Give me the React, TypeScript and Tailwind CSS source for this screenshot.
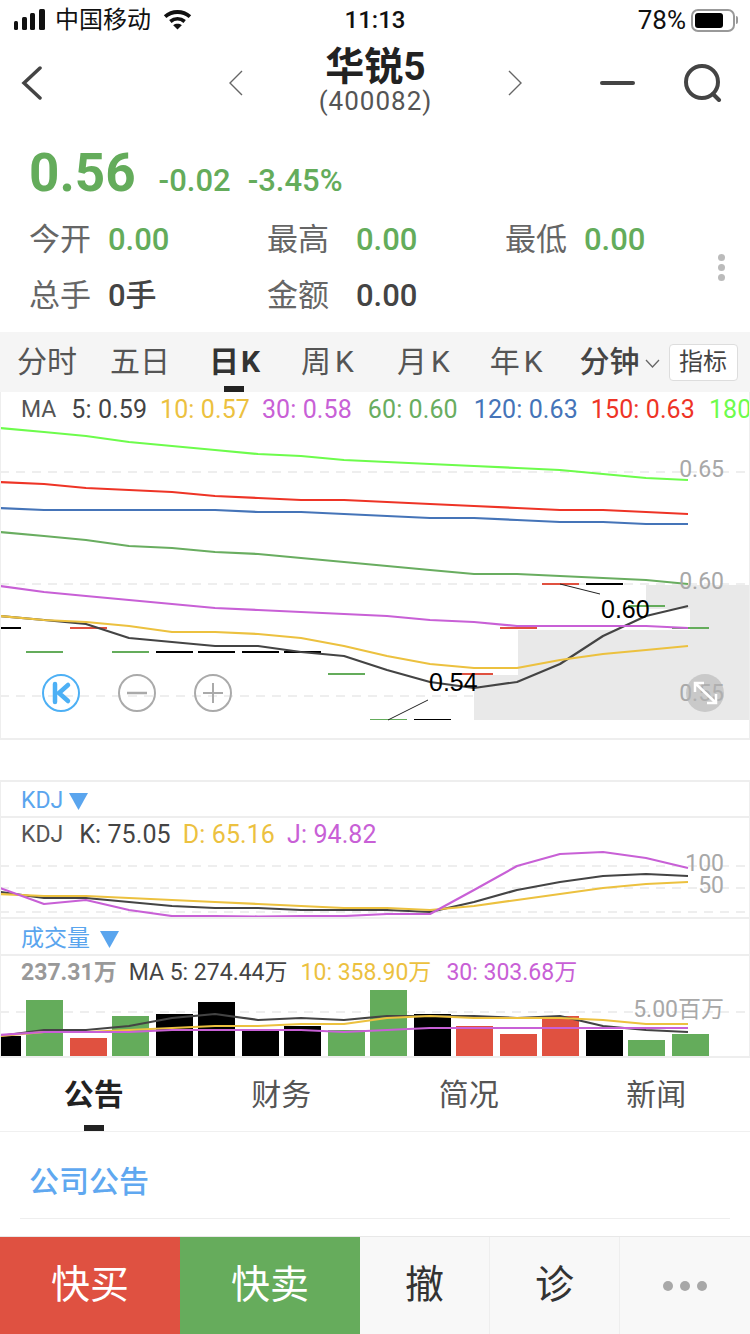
import React from 'react';

const xs = [0, 44, 86, 129, 172, 215, 258, 301, 344, 387, 430, 474, 517, 560, 603, 646, 688];

const RED = '#e05140';
const GREEN = '#64ac5b';
const YELLOW = '#ecc13f';
const PURPLE = '#c860d6';
const DARK = '#444444';

const maLines = [
  { color: '#6dfc4c', ys: [428, 432, 436, 442, 446, 450, 454, 456, 460, 462, 464, 466, 468, 470, 474, 478, 480] },
  { color: '#ee3426', ys: [482, 484, 488, 490, 492, 496, 498, 500, 500, 502, 504, 506, 508, 510, 510, 512, 514] },
  { color: '#4574b8', ys: [508, 510, 510, 510, 510, 510, 512, 512, 514, 516, 518, 518, 520, 522, 522, 524, 524] },
  { color: '#69ad60', ys: [532, 536, 540, 546, 548, 552, 554, 558, 562, 566, 570, 574, 574, 576, 578, 580, 584] },
  { color: DARK, ys: [616, 620, 624, 638, 642, 646, 646, 652, 656, 670, 682, 688, 682, 664, 636, 616, 606] },
  { color: YELLOW, ys: [616, 620, 622, 626, 632, 632, 634, 638, 646, 656, 664, 668, 668, 660, 654, 650, 646] },
  { color: PURPLE, ys: [586, 592, 596, 600, 604, 608, 610, 612, 614, 616, 620, 622, 626, 626, 626, 626, 628] },
];

// flat candles, open == close
const candles = [
  { x: 0, w: 21, y: 628, c: '#000' },
  { x: 26, w: 37, y: 652, c: GREEN },
  { x: 70, w: 37, y: 628, c: RED },
  { x: 112, w: 37, y: 652, c: GREEN },
  { x: 156, w: 37, y: 652, c: '#000' },
  { x: 198, w: 37, y: 652, c: '#000' },
  { x: 242, w: 37, y: 652, c: '#000' },
  { x: 284, w: 37, y: 652, c: '#000' },
  { x: 328, w: 37, y: 674, c: GREEN },
  { x: 370, w: 37, y: 719.5, c: GREEN, thin: true },
  { x: 414, w: 37, y: 719.5, c: '#000', thin: true },
  { x: 456, w: 37, y: 674, c: RED },
  { x: 500, w: 37, y: 628, c: RED },
  { x: 542, w: 37, y: 584, c: RED },
  { x: 586, w: 37, y: 584, c: '#000' },
  { x: 628, w: 37, y: 606, c: GREEN },
  { x: 672, w: 37, y: 628, c: GREEN },
];

const volumes = [
  { x: 0, w: 21, top: 1036, c: '#000' },
  { x: 26, w: 37, top: 1000, c: GREEN },
  { x: 70, w: 37, top: 1038, c: RED },
  { x: 112, w: 37, top: 1016, c: GREEN },
  { x: 156, w: 37, top: 1014, c: '#000' },
  { x: 198, w: 37, top: 1002, c: '#000' },
  { x: 242, w: 37, top: 1030, c: '#000' },
  { x: 284, w: 37, top: 1026, c: '#000' },
  { x: 328, w: 37, top: 1030, c: GREEN },
  { x: 370, w: 37, top: 990, c: GREEN },
  { x: 414, w: 37, top: 1014, c: '#000' },
  { x: 456, w: 37, top: 1026, c: RED },
  { x: 500, w: 37, top: 1034, c: RED },
  { x: 542, w: 37, top: 1016, c: RED },
  { x: 586, w: 37, top: 1030, c: '#000' },
  { x: 628, w: 37, top: 1040, c: GREEN },
  { x: 672, w: 37, top: 1034, c: GREEN },
];

const volLines = [
  { color: DARK, ys: [1036, 1030, 1030, 1026, 1018, 1014, 1020, 1018, 1020, 1016, 1016, 1016, 1018, 1016, 1026, 1030, 1032] },
  { color: YELLOW, ys: [1036, 1032, 1032, 1030, 1028, 1026, 1026, 1024, 1024, 1018, 1016, 1018, 1018, 1018, 1020, 1024, 1024] },
  { color: PURPLE, ys: [1035, 1032, 1032, 1032, 1030, 1030, 1030, 1030, 1032, 1030, 1028, 1028, 1028, 1028, 1028, 1028, 1028] },
];

const kdjLines = [
  { color: DARK, ys: [892, 898, 898, 902, 906, 908, 908, 910, 910, 910, 912, 902, 890, 882, 876, 874, 876] },
  { color: YELLOW, ys: [894, 896, 896, 898, 900, 902, 904, 906, 908, 908, 910, 906, 900, 894, 888, 884, 882] },
  { color: PURPLE, ys: [888, 904, 900, 910, 916, 916, 916.5, 916, 916, 914, 914, 890, 866, 854, 852, 858, 868] },
];

const maLegend = [
  { text: '5: 0.59', cls: 'ml-[15px] text-[#444]' },
  { text: '10: 0.57', cls: 'ml-[13px] text-[#ecc13f]' },
  { text: '30: 0.58', cls: 'ml-[12px] text-[#c860d6]' },
  { text: '60: 0.60', cls: 'ml-[16px] text-[#69ad60]' },
  { text: '120: 0.63', cls: 'ml-[16px] text-[#4574b8]' },
  { text: '150: 0.63', cls: 'ml-[13px] text-[#ee3426]' },
  { text: '180', cls: 'ml-[14px] text-[#6dfc4c]' },
];

const Line = ({ color, ys }: { color: string; ys: number[] }) => (
  <polyline points={ys.map((y, i) => `${xs[i]},${y}`).join(' ')} fill="none" stroke={color} strokeWidth="2.2" strokeLinejoin="round" />
);

const Dash = ({ y }: { y: number }) => (
  <line x1="0" x2="750" y1={y} y2={y} stroke="#eeeeee" strokeWidth="2" strokeDasharray="9 7" />
);

const AxisLabel = ({ x, y, children }: { x: number; y: number; children: React.ReactNode }) => (
  <text x={x} y={y} textAnchor="end" fontSize="23" fill="#a8a8a8">{children}</text>
);

const Chevron = ({ dir, className }: { dir: 'left' | 'right'; className: string }) => (
  <svg viewBox="0 0 14 26" className={className} fill="none" stroke="#666" strokeWidth="1.4">
    <path d={dir === 'left' ? 'M13 1L1 13l12 12' : 'M1 1l12 12L1 25'} />
  </svg>
);

const QuoteCell = ({ label, value, gap, tone }: { label: string; value: string; gap: string; tone: string }) => (
  <div className="flex items-center h-[56px]">
    <span className="text-[31px] leading-none text-[#666]">{label}</span>
    <span className={`${gap} text-[31px] leading-none font-medium ${tone}`}>{value}</span>
  </div>
);

const Triangle = ({ className }: { className: string }) => (
  <svg viewBox="0 0 19 17" className={className}><path d="M0 0h19L9.5 17z" fill="#5aa5ee" /></svg>
);

const KTab = ({ label, className }: { label: string; className: string }) => (
  <span className={className}>{label}<span className="ml-[4px]">K</span></span>
);

const KlineChart = () => (
  <svg viewBox="1 426 748 312" className="block w-[748px] h-[312px]">
    <Dash y={472} />
    <Dash y={584} />
    <Dash y={696} />
    <polygon points="474,720 474,675 518,675 518,630 690,630 690,609 646,609 646,585 750,585 750,720" fill="#e9e9e9" />
    {candles.map((k) => (
      <rect key={k.x} x={k.x} y={k.y - (k.thin ? 0.5 : 1)} width={k.w} height={k.thin ? 1 : 2} fill={k.c} />
    ))}
    {maLines.map((l) => <Line key={l.color} {...l} />)}
    <line x1="388" y1="720" x2="428" y2="700" stroke="#222" strokeWidth="1" />
    <line x1="560" y1="584" x2="600" y2="594" stroke="#222" strokeWidth="1" />
    <text x="429" y="691" fontSize="25" fill="#000" fontFamily="Liberation Sans">0.54</text>
    <text x="601" y="618" fontSize="25" fill="#000" fontFamily="Liberation Sans">0.60</text>
    <AxisLabel x={724} y={477}>0.65</AxisLabel>
    <AxisLabel x={724} y={589}>0.60</AxisLabel>
    <AxisLabel x={724} y={701}>0.55</AxisLabel>
    <circle cx="705" cy="693" r="19" fill="#b4b4b4" fillOpacity="0.6" />
    <path d="M695 692v-9h9M695 683l21 20M716 694v9h-9" fill="none" stroke="#fff" strokeWidth="2.5" />
  </svg>
);

const ZoomControls = () => (
  <div className="absolute left-[41px] top-[282px] flex gap-[38px]">
    <svg viewBox="0 0 38 38" className="w-[38px] h-[38px]" fill="none">
      <circle cx="19" cy="19" r="18" stroke="#4db0f5" strokeWidth="2" />
      <path d="M13 10v18M26 11l-9 8 9 8" stroke="#4db0f5" strokeWidth="4.5" strokeLinecap="round" strokeLinejoin="round" />
    </svg>
    <svg viewBox="0 0 38 38" className="w-[38px] h-[38px]" fill="none" stroke="#aaa" strokeWidth="2">
      <circle cx="19" cy="19" r="18" />
      <path d="M9 19h20" strokeWidth="2.5" />
    </svg>
    <svg viewBox="0 0 38 38" className="w-[38px] h-[38px]" fill="none" stroke="#aaa" strokeWidth="2">
      <circle cx="19" cy="19" r="18" />
      <path d="M9 19h20M19 9v20" />
    </svg>
  </div>
);

const KdjChart = () => (
  <svg viewBox="1 850 748 67" className="block w-[748px] h-[67px]">
    <Dash y={866} />
    <Dash y={888} />
    <Dash y={912} />
    {kdjLines.map((l) => <Line key={l.color} {...l} />)}
    <AxisLabel x={724} y={871}>100</AxisLabel>
    <AxisLabel x={724} y={893}>50</AxisLabel>
  </svg>
);

const VolumeChart = () => (
  <svg viewBox="1 988 748 68" className="block w-[748px] h-[68px]">
    <Dash y={1012} />
    {volumes.map((v) => (
      <rect key={v.x} x={v.x} y={v.top} width={v.w} height={1056 - v.top} fill={v.c} />
    ))}
    {volLines.map((l) => <Line key={l.color} {...l} />)}
    <AxisLabel x={724} y={1017}>5.00百万</AxisLabel>
  </svg>
);

export default function App() {
  return (
    <div className="w-[750px] h-[1334px] overflow-hidden bg-white flex flex-col [font-family:Roboto,'Noto_Sans_CJK_SC',sans-serif]">
      {/* 状态栏 */}
      <div className="h-[40px] flex items-center shrink-0 text-[#111]">
        <div className="flex-1 flex items-center pl-[14px]">
          <svg viewBox="0 0 32 21" className="w-[32px] h-[21px] mb-[2px]" fill="#111">
            <rect x="0" y="12" width="4" height="9" rx="1.5" />
            <rect x="8" y="8" width="5" height="13" rx="1.5" />
            <rect x="16" y="4" width="5" height="17" rx="1.5" />
            <rect x="25" y="0" width="6" height="21" rx="1.5" />
          </svg>
          <span className="ml-[9px] text-[24px] leading-none">中国移动</span>
          <svg viewBox="0 0 30 22" className="ml-[12px] w-[29px] h-[21px] mb-[2px]" fill="none" stroke="#111" strokeWidth="4">
            <path d="M2 8c7.500-6.500 18.500-6.500 26 0" />
            <path d="M7.500 13c4.500-3.500 10.500-3.500 15 0" />
            <path d="M15 21.500l-4.500-4.500c2.500-2 6.500-2 9 0z" fill="#111" stroke="none" />
          </svg>
        </div>
        <span className="text-[24px] leading-none font-medium -ml-[2px]">11:13</span>
        <div className="flex-1 flex items-center justify-end pr-[12px]">
          <span className="text-[26px] leading-none">78%</span>
          <div className="ml-[5px] w-[44px] h-[23px] rounded-[7px] border-2 border-[#999] p-[2px]">
            <div className="w-[28px] h-full rounded-[3px] bg-black" />
          </div>
          <div className="ml-[1px] w-[2px] h-[8px] rounded-r-full bg-[#999]" />
        </div>
      </div>

      {/* 标题栏 */}
      <div className="h-[85px] flex items-center shrink-0">
        <div className="w-[243px] flex items-center justify-between pl-[21px]">
          <svg viewBox="0 0 21 34" className="w-[21px] h-[34px]" fill="none" stroke="#444" strokeWidth="3.5" strokeLinecap="round">
            <path d="M19 2L3 17l16 15" />
          </svg>
          <Chevron dir="left" className="w-[14px] h-[26px]" />
        </div>
        <div className="w-[265px] flex flex-col items-center -mt-[5px]">
          <span className="text-[39px] leading-[41px] font-bold text-[#222]">华锐5</span>
          <span className="text-[26px] leading-[26px] tracking-[1px] text-[#555]">(400082)</span>
        </div>
        <Chevron dir="right" className="w-[14px] h-[26px]" />
        <div className="ml-[78px] w-[35px] h-[4px] rounded-full bg-[#444]" />
        <svg viewBox="0 0 38 38" className="ml-[49px] w-[38px] h-[38px]" fill="none" stroke="#444" strokeWidth="4" strokeLinecap="round">
          <circle cx="18" cy="18" r="16" />
          <path d="M29 30l6 6" />
        </svg>
      </div>

      {/* 行情 */}
      <div className="h-[207px] shrink-0 flex flex-col">
        <div className="h-[86px] pl-[29px] flex items-end pb-[11px]">
          <span className="text-[53px] leading-none font-bold text-[#64ac5b]">0.56</span>
          <span className="ml-[23px] mb-[4px] text-[31px] leading-none font-medium text-[#64ac5b]">-0.02</span>
          <span className="ml-[17px] mb-[4px] text-[31px] leading-none font-medium text-[#64ac5b]">-3.45%</span>
        </div>
        <div className="flex items-center pl-[29px]">
          <div className="flex-1 grid grid-cols-[238px_238px_1fr]">
            <QuoteCell label="今开" value="0.00" gap="ml-[17px]" tone="text-[#64ac5b]" />
            <QuoteCell label="最高" value="0.00" gap="ml-[27px]" tone="text-[#64ac5b]" />
            <QuoteCell label="最低" value="0.00" gap="ml-[17px]" tone="text-[#64ac5b]" />
            <QuoteCell label="总手" value="0手" gap="ml-[17px]" tone="text-[#444]" />
            <QuoteCell label="金额" value="0.00" gap="ml-[27px]" tone="text-[#444]" />
          </div>
          <div className="mr-[25px] flex flex-col gap-[3px]">
            <div className="w-[7px] h-[7px] rounded-full bg-[#bbb]" />
            <div className="w-[7px] h-[7px] rounded-full bg-[#bbb]" />
            <div className="w-[7px] h-[7px] rounded-full bg-[#bbb]" />
          </div>
        </div>
      </div>

      {/* K线周期 */}
      <div className="h-[60px] shrink-0 bg-[#f5f5f5] flex items-center pl-[17px] text-[30px] leading-none text-[#555]">
        <span>分时</span>
        <span className="ml-[33px]">五日</span>
        <span className="relative ml-[39px] h-full flex items-center font-bold text-[#333]">
          日<span className="ml-[2px]">K</span>
          <span className="absolute left-[15px] bottom-0 w-[20px] h-[6px] bg-[#222]" />
        </span>
        <KTab label="周" className="ml-[41px]" />
        <KTab label="月" className="ml-[43px]" />
        <KTab label="年" className="ml-[40px]" />
        <span className="ml-[37px] font-medium text-[#444]">分钟</span>
        <svg viewBox="0 0 15 9" className="ml-[5px] mt-[3px] w-[15px] h-[9px]" fill="none" stroke="#666" strokeWidth="1.3">
          <path d="M1 1l6.500 7L14 1" />
        </svg>
        <div className="ml-[9px] w-[69px] h-[37px] shrink-0 flex items-center justify-center bg-white border border-[#ddd] rounded-[4px] text-[24px] text-[#444]">指标</div>
      </div>

      {/* K线图 */}
      <div className="relative h-[348px] shrink-0 border-x border-b-2 border-[#eeeeee] flex flex-col">
        <div className="h-[34px] shrink-0 flex items-center pl-[20px] text-[25px] leading-none tracking-[0.1px] whitespace-nowrap overflow-hidden">
          <span className="text-[23px] tracking-normal text-[#555]">MA</span>
          {maLegend.map((m) => (
            <span key={m.text} className={m.cls}>{m.text}</span>
          ))}
        </div>
        <KlineChart />
        <ZoomControls />
      </div>

      <div className="h-[40px] shrink-0" />

      {/* KDJ */}
      <div className="h-[38px] shrink-0 border-x border-y-2 border-[#eeeeee] flex items-center pt-[5px] pl-[20px] text-[23px] text-[#5aa5ee]">
        KDJ
        <Triangle className="ml-[6px] w-[19px] h-[17px] -mt-[1px]" />
      </div>
      <div className="h-[99px] shrink-0 border-x border-[#eeeeee] flex flex-col">
        <div className="h-[32px] shrink-0 flex items-center pl-[20px] text-[25px] leading-none tracking-[0.1px] whitespace-nowrap">
          <span className="text-[23px] tracking-normal text-[#555]">KDJ</span>
          <span className="ml-[16px] text-[#444]">K: 75.05</span>
          <span className="ml-[12px] text-[#ecc13f]">D: 65.16</span>
          <span className="ml-[12px] text-[#c860d6]">J: 94.82</span>
        </div>
        <KdjChart />
      </div>

      {/* 成交量 */}
      <div className="h-[39px] shrink-0 border-x border-y-2 border-[#eeeeee] flex items-center pt-[5px] pl-[20px] text-[23px] text-[#5aa5ee]">
        成交量
        <Triangle className="ml-[10px] w-[19px] h-[17px]" />
      </div>
      <div className="h-[102px] shrink-0 border-x border-b-2 border-[#eeeeee] flex flex-col">
        <div className="h-[32px] shrink-0 flex items-center pl-[20px] text-[23px] leading-none whitespace-nowrap">
          <span className="font-bold text-[#999]">237.31万</span>
          <span className="ml-[12px] text-[#444]">MA 5: 274.44万</span>
          <span className="ml-[13px] text-[#ecc13f]">10: 358.90万</span>
          <span className="ml-[15px] text-[#c860d6]">30: 303.68万</span>
        </div>
        <VolumeChart />
      </div>

      {/* 资讯 */}
      <div className="h-[74px] shrink-0 grid grid-cols-4 border-b border-[#f0f0f0] text-[30px] text-[#555]">
        <div className="relative flex items-center justify-center font-bold text-[#222]">
          公告
          <span className="absolute left-[84px] bottom-0 w-[20px] h-[6px] bg-[#222]" />
        </div>
        <div className="flex items-center justify-center">财务</div>
        <div className="flex items-center justify-center">简况</div>
        <div className="flex items-center justify-center">新闻</div>
      </div>
      <div className="h-[87px] shrink-0 mx-[20px] pl-[9px] pt-[12px] flex items-center border-b border-[#eeeeee] text-[30px] font-medium text-[#5fa8f0]">
        公司公告
      </div>

      {/* 底部交易栏 */}
      <div className="mt-auto h-[98px] shrink-0 flex border-t border-[#e8e8e8] text-[39px]">
        <div className="w-[180px] flex items-center justify-center bg-[#df5141] text-white">快买</div>
        <div className="w-[180px] flex items-center justify-center bg-[#66ac5c] text-white">快卖</div>
        <div className="w-[130px] flex items-center justify-center bg-[#f8f8f8] text-[#333] border-r border-[#eeeeee]">撤</div>
        <div className="w-[130px] flex items-center justify-center bg-[#f8f8f8] text-[#333] border-r border-[#eeeeee]">诊</div>
        <div className="flex-1 flex items-center justify-center gap-[7px] bg-[#f8f8f8]">
          <div className="w-[10px] h-[10px] rounded-full bg-[#a8a8a8]" />
          <div className="w-[10px] h-[10px] rounded-full bg-[#a8a8a8]" />
          <div className="w-[10px] h-[10px] rounded-full bg-[#a8a8a8]" />
        </div>
      </div>
    </div>
  );
}
